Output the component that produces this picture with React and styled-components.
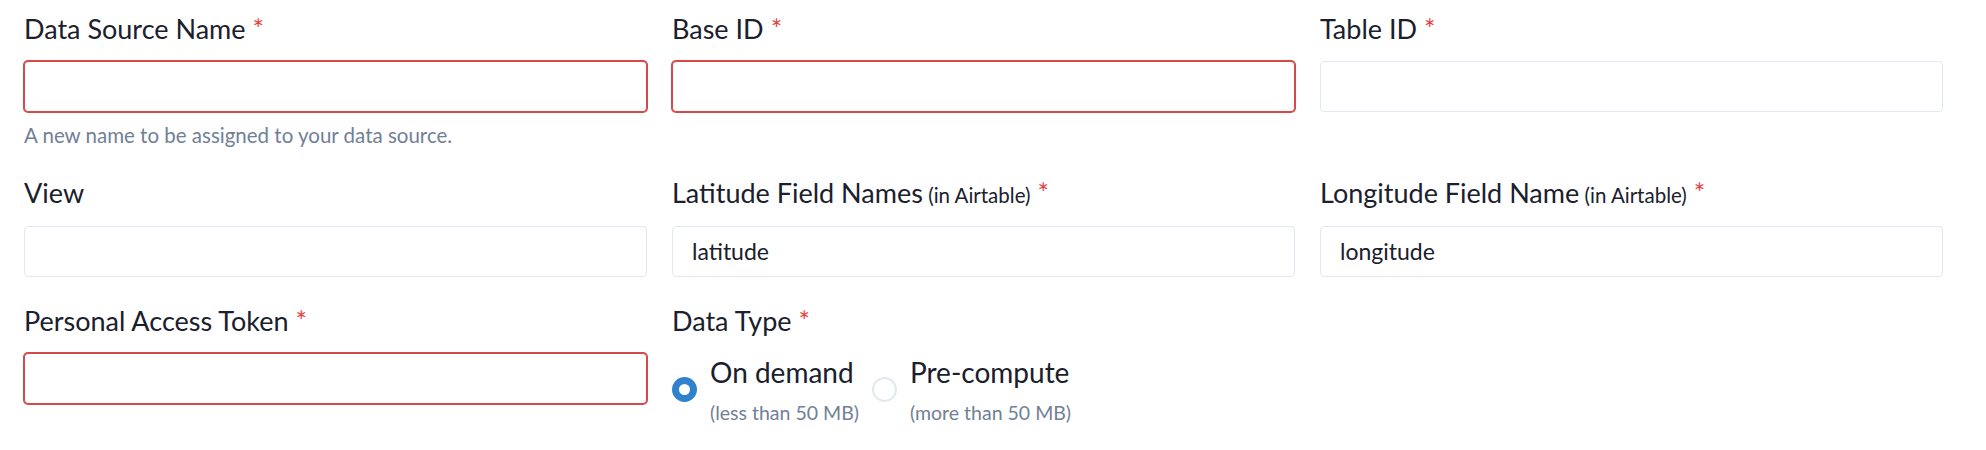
import React from 'react';
import styled, { createGlobalStyle } from 'styled-components';

const GlobalStyle = createGlobalStyle`
  body {
    margin: 0;
    background: #ffffff;
    font-family: Lato, "Open Sans", sans-serif;
    color: #1a202c;
  }
`

const Form = styled.form`
  display: grid;
  grid-template-columns: repeat(3, 1fr);
  column-gap: 25px;
  row-gap: 28px;
  padding: 13px 43px 0 24px;
`

const Field = styled.div`
  display: flex;
  flex-direction: column;
  min-width: 0;
`

const Label = styled.label`
  display: block;
  font-size: 27px;
  line-height: 1.2;
  color: #1a202c;
  margin-bottom: 16px;
  white-space: nowrap;
`

const LabelNote = styled.span`
  font-size: 20.5px;
`

const Required = styled.span`
  color: #e53e3e;
  margin-left: 7px;
`

const Input = styled.input`
  box-sizing: border-box;
  width: 100%;
  height: 51px;
  padding: 0 19px;
  font-family: Lato, "Open Sans", sans-serif;
  font-size: 23px;
  color: #1a202c;
  background: #ffffff;
  border: 1px solid ${p => (p.$invalid ? '#d6494b' : '#e2e8f0')};
  border-radius: 4px;
  box-shadow: ${p => (p.$invalid ? '0 0 0 1px #d6494b' : 'none')};
  outline: none;
`

const Helper = styled.div`
  margin-top: 9px;
  font-size: 20.5px;
  line-height: 28px;
  color: #718096;
`

const RadioGroup = styled.div`
  display: flex;
  align-items: center;
  gap: 13px;
  margin-top: 0;
`

const RadioOption = styled.label`
  display: flex;
  align-items: center;
  gap: 13px;
  cursor: pointer;
`

const RadioControl = styled.span`
  box-sizing: border-box;
  width: 25px;
  height: 25px;
  border-radius: 50%;
  border: 2px solid ${p => (p.$checked ? '#3182ce' : '#e2e8f0')};
  background: ${p => (p.$checked ? '#3182ce' : '#ffffff')};
  display: flex;
  align-items: center;
  justify-content: center;
  flex-shrink: 0;

  &::after {
    content: '';
    display: ${p => (p.$checked ? 'block' : 'none')};
    width: 11px;
    height: 11px;
    border-radius: 50%;
    background: #ffffff;
  }
`

const RadioText = styled.span`
  display: flex;
  flex-direction: column;
`

const RadioTitle = styled.span`
  font-size: 28px;
  line-height: 39px;
  color: #1a202c;
`

const RadioSub = styled.span`
  margin-top: 9px;
  font-size: 19.5px;
  line-height: 24px;
  color: #718096;
`

const FieldLabel = ({ children, note, required }) => (
  <Label>
    {children}
    {note && <LabelNote> {note}</LabelNote>}
    {required && <Required>*</Required>}
  </Label>
)

const options = [
  { title: 'On demand', sub: '(less than 50 MB)', checked: true },
  { title: 'Pre-compute', sub: '(more than 50 MB)', checked: false },
]

export default function App() {
  return (
    <>
      <GlobalStyle />
      <Form onSubmit={e => e.preventDefault()}>
        <Field>
          <FieldLabel required>Data Source Name</FieldLabel>
          <Input $invalid />
          <Helper>A new name to be assigned to your data source.</Helper>
        </Field>
        <Field>
          <FieldLabel required>Base ID</FieldLabel>
          <Input $invalid />
        </Field>
        <Field>
          <FieldLabel required>Table ID</FieldLabel>
          <Input />
        </Field>

        <Field>
          <FieldLabel>View</FieldLabel>
          <Input />
        </Field>
        <Field>
          <FieldLabel required note="(in Airtable)">Latitude Field Names</FieldLabel>
          <Input defaultValue="latitude" />
        </Field>
        <Field>
          <FieldLabel required note="(in Airtable)">Longitude Field Name</FieldLabel>
          <Input defaultValue="longitude" />
        </Field>

        <Field>
          <FieldLabel required>Personal Access Token</FieldLabel>
          <Input $invalid />
        </Field>
        <Field>
          <FieldLabel required>Data Type</FieldLabel>
          <RadioGroup>
            {options.map(o => (
              <RadioOption key={o.title}>
                <RadioControl $checked={o.checked} />
                <RadioText>
                  <RadioTitle>{o.title}</RadioTitle>
                  <RadioSub>{o.sub}</RadioSub>
                </RadioText>
              </RadioOption>
            ))}
          </RadioGroup>
        </Field>
      </Form>
    </>
  )
}
